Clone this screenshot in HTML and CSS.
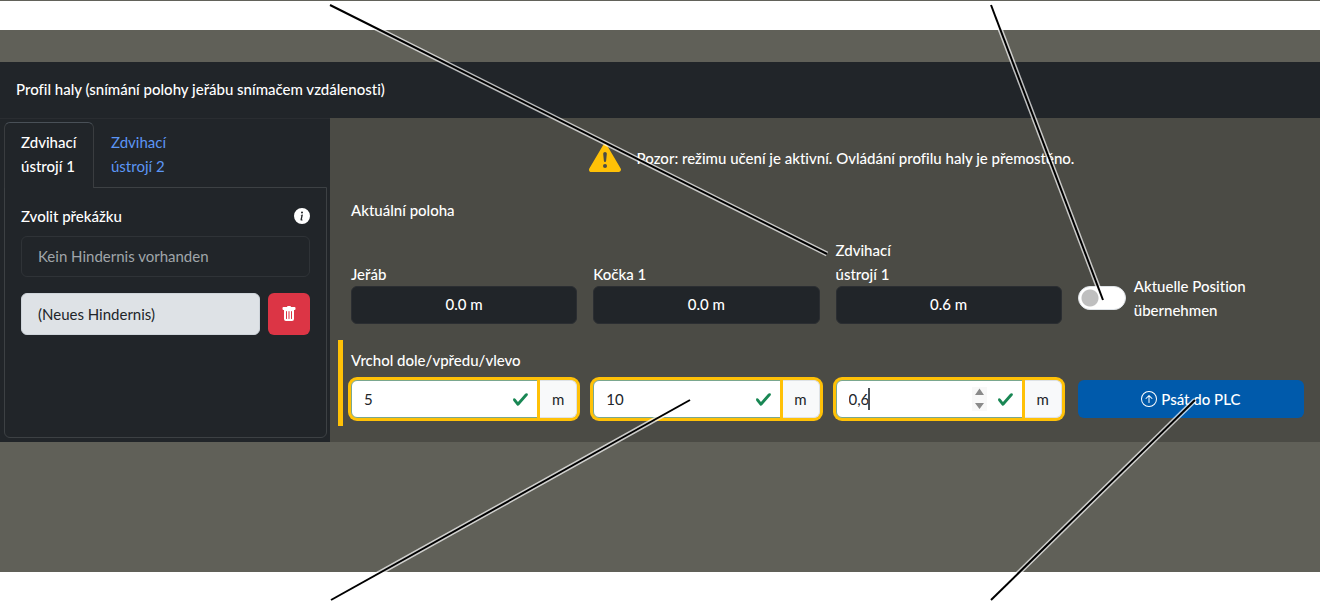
FILE: index.html
```
<!DOCTYPE html>
<html lang="cs">
<head>
    <meta charset="UTF-8">
    <meta name="viewport" content="width=device-width, initial-scale=1.0">
    <title>Profil haly</title>
    <link rel="stylesheet" href="styles.css">
</head>
<body>
    <div class="backdrop">
        <div class="dialog">
            <header class="dialog-header">
                <h1>Profil haly (snímání polohy jeřábu snímačem vzdálenosti)</h1>
            </header>
            <div class="dialog-body">
                <aside class="sidebar">
                    <nav class="tabs">
                        <a href="#hoist-1" class="tab active">Zdvihací ústrojí&nbsp;1</a>
                        <a href="#hoist-2" class="tab">Zdvihací ústrojí&nbsp;2</a>
                    </nav>
                    <div class="tab-panel" id="hoist-1">
                        <div class="panel-title">
                            <h2>Zvolit překážku</h2>
                            <svg class="icon" viewBox="0 0 16 16" fill="currentColor">
                                <path d="M8 16A8 8 0 1 0 8 0a8 8 0 0 0 0 16m.93-9.412-1 4.705c-.07.34.029.533.304.533.194 0 .487-.07.686-.246l-.088.416c-.287.346-.92.598-1.465.598-.703 0-1.002-.422-.808-1.319l.738-3.468c.064-.293.006-.399-.287-.47l-.451-.081.082-.381zM8 5.5a1 1 0 1 1 0-2 1 1 0 0 1 0 2"/>
                            </svg>
                        </div>
                        <p class="obstacle-empty">Kein Hindernis vorhanden</p>
                        <div class="obstacle-row">
                            <button type="button" class="obstacle">(Neues Hindernis)</button>
                            <button type="button" class="delete-button" aria-label="Smazat">
                                <svg class="icon" viewBox="0 0 16 16" fill="currentColor">
                                    <path d="M2.5 1a1 1 0 0 0-1 1v1a1 1 0 0 0 1 1H3v9a2 2 0 0 0 2 2h6a2 2 0 0 0 2-2V4h.5a1 1 0 0 0 1-1V2a1 1 0 0 0-1-1H10a1 1 0 0 0-1-1H7a1 1 0 0 0-1 1zm3 4a.5.5 0 0 1 .5.5v7a.5.5 0 0 1-1 0v-7a.5.5 0 0 1 .5-.5M8 5a.5.5 0 0 1 .5.5v7a.5.5 0 0 1-1 0v-7A.5.5 0 0 1 8 5m3 .5v7a.5.5 0 0 1-1 0v-7a.5.5 0 0 1 1 0"/>
                                </svg>
                            </button>
                        </div>
                    </div>
                </aside>

                <main class="content">
                    <div class="warning">
                        <svg class="warning-icon" viewBox="0 0 16 16" fill="currentColor">
                            <path d="M8.982 1.566a1.13 1.13 0 0 0-1.96 0L.165 13.233c-.457.778.091 1.767.98 1.767h13.713c.889 0 1.438-.99.98-1.767zM8 5c.535 0 .954.462.9.995l-.35 3.507a.552.552 0 0 1-1.1 0L7.1 5.995A.905.905 0 0 1 8 5m.002 6a1 1 0 1 1 0 2 1 1 0 0 1 0-2"/>
                        </svg>
                        <p>Pozor: režimu učení je aktivní. Ovládání profilu haly je přemostěno.</p>
                    </div>

                    <section class="group">
                        <h2>Aktuální poloha</h2>
                        <div class="grid positions">
                            <div class="position">
                                <span>Jeřáb</span>
                                <output>0.0 m</output>
                            </div>
                            <div class="position">
                                <span>Kočka 1</span>
                                <output>0.0 m</output>
                            </div>
                            <div class="position">
                                <span class="two-lines">Zdvihací ústrojí&nbsp;1</span>
                                <output>0.6 m</output>
                            </div>
                            <div class="switch">
                                <input type="checkbox" id="take-position">
                                <label for="take-position">Aktuelle Position übernehmen</label>
                            </div>
                        </div>
                    </section>

                    <form class="group changed">
                        <h2>Vrchol dole/vpředu/vlevo</h2>
                        <div class="grid">
                            <div class="input-group">
                                <div class="field">
                                    <input type="text" id="crane" value="5" aria-label="Jeřáb">
                                    <svg class="check" viewBox="0 0 8 8"><path fill="#198754" d="M2.3 6.73.6 4.53c-.4-1.04.46-1.4 1.1-.8l1.1 1.4 3.4-3.8c.6-.63 1.6-.27 1.2.7l-4 4.6c-.43.5-.8.4-1.1.1"/></svg>
                                </div>
                                <label for="crane" class="unit">m</label>
                            </div>
                            <div class="input-group">
                                <div class="field">
                                    <input type="text" id="trolley" value="10" aria-label="Kočka 1">
                                    <svg class="check" viewBox="0 0 8 8"><path fill="#198754" d="M2.3 6.73.6 4.53c-.4-1.04.46-1.4 1.1-.8l1.1 1.4 3.4-3.8c.6-.63 1.6-.27 1.2.7l-4 4.6c-.43.5-.8.4-1.1.1"/></svg>
                                </div>
                                <label for="trolley" class="unit">m</label>
                            </div>
                            <div class="input-group">
                                <div class="field">
                                    <input type="text" id="hoist" value="0,6" aria-label="Zdvihací ústrojí 1">
                                    <span class="caret"></span>
                                    <svg class="spinner" viewBox="0 0 15 24"><path fill="#f8f8f8" d="M0 0h15v24H0z"/><path fill="#8a8a8a" d="M3 8l4.500-6.500 4.500 6.500zM3 16h9l-4.500 6z"/></svg>
                                    <svg class="check" viewBox="0 0 8 8"><path fill="#198754" d="M2.3 6.73.6 4.53c-.4-1.04.46-1.4 1.1-.8l1.1 1.4 3.4-3.8c.6-.63 1.6-.27 1.2.7l-4 4.6c-.43.5-.8.4-1.1.1"/></svg>
                                </div>
                                <label for="hoist" class="unit">m</label>
                            </div>
                            <button type="submit" class="write-button">
                                <svg class="icon" viewBox="0 0 16 16" fill="currentColor">
                                    <path d="M1 8a7 7 0 1 0 14 0A7 7 0 0 0 1 8m15 0A8 8 0 1 1 0 8a8 8 0 0 1 16 0m-7.500 3.500a.5.5 0 0 1-1 0V5.707L5.354 7.854a.5.5 0 1 1-.708-.708l3-3a.5.5 0 0 1 .708 0l3 3a.5.5 0 0 1-.708.708L8.500 5.707z"/>
                                </svg>
                                Psát do PLC
                            </button>
                        </div>
                    </form>
                </main>
            </div>
        </div>
    </div>

    <!-- Leader lines of the annotations -->
    <svg class="leaders" viewBox="0 0 1320 604">
        <g class="leader-halo">
            <path d="M330 5 827 254"/>
            <path d="M991 5 1103 300"/>
            <path d="M331 600 690 400"/>
            <path d="M991 600 1195 400"/>
        </g>
        <g class="leader-line">
            <path d="M330 5 827 254"/>
            <path d="M991 5 1103 300"/>
            <path d="M331 600 690 400"/>
            <path d="M991 600 1195 400"/>
        </g>
    </svg>
</body>
</html>
```
FILE: styles.css
```
/* Basic Reset */
* {
    margin: 0;
    padding: 0;
    box-sizing: border-box;
}

body {
    position: relative;
    font-family: Lato, "Noto Sans", sans-serif;
    font-size: 15px;
    font-variant-ligatures: none;
    line-height: 24px;
    color: #fff;
    background: #fff;
    border-top: 1px solid #62625a;
    padding: 29px 0 32px;
}

h1, h2 {
    font-size: 15px;
    font-weight: 500;
}

button, input {
    font: inherit;
}

.icon {
    width: 16px;
    height: 16px;
    flex: none;
}

/* Dialog */
.backdrop {
    background: #606058;
    padding: 32px 0 130px;
}

.dialog-header {
    background: #212529;
    padding: 15px 16px 17px;
}

.dialog-body {
    display: flex;
}

/* Sidebar */
.sidebar {
    flex: 0 0 25%;
    display: flex;
    flex-direction: column;
    background: #212529;
    border-top: 1px solid #2a2d31;
    padding: 3px 3px 4px 4px;
}

.tabs {
    display: flex;
}

.tab {
    width: min-content;
    min-width: 90px;
    padding: 7px 16px 9px;
    border: 1px solid transparent;
    border-bottom: none;
    color: #5c96f5;
    text-decoration: none;
}

.tab.active {
    color: #fff;
    font-weight: 500;
    background: #212529;
    border-color: #495057 #3a3d40 #212529;
    border-radius: 6px 6px 0 0;
    margin-bottom: -1px;
    padding-bottom: 10px;
    z-index: 1;
}

.tab-panel {
    flex: 1;
    border: 1px solid #3d4144;
    border-radius: 0 0 6px 6px;
    padding: 16px;
}

.panel-title {
    display: flex;
    align-items: center;
    justify-content: space-between;
    margin-bottom: 8px;
}

.obstacle-empty {
    padding: 7px 16px 8px;
    border: 1px solid #2f3337;
    border-radius: 6px;
    color: #a0a5aa;
    margin-bottom: 16px;
}

.obstacle-row {
    display: flex;
    gap: 8px;
}

.obstacle {
    flex: 1;
    padding: 8px 16px;
    border: 1px solid #ced4da;
    border-radius: 6px;
    background: #dee2e6;
    color: #212529;
    text-align: left;
}

.delete-button {
    display: flex;
    align-items: center;
    justify-content: center;
    width: 42px;
    height: 42px;
    border: none;
    border-radius: 6px;
    background: #dc3545;
    color: #fff;
}

/* Content */
.content {
    flex: 1;
    background: #4b4b45;
    padding: 24px 0 16px 8px;
}

.warning {
    display: flex;
    align-items: center;
    justify-content: center;
    gap: 16px;
    margin: 0 0 16px 5px;
    font-weight: 500;
}

.warning-icon {
    width: 32px;
    height: 32px;
    color: #ffc107;
}

.group {
    border-left: 5px solid transparent;
    padding: 8px 16px 8px 8px;
}

.group.changed {
    border-color: #ffc107;
    margin-top: 8px;
}

.grid {
    display: grid;
    grid-template-columns: repeat(4, 1fr);
    gap: 16px;
    margin-top: 8px;
}

.positions {
    margin-top: 16px;
    align-items: end;
    font-weight: 500;
}

.position {
    display: flex;
    flex-direction: column;
}

.two-lines {
    width: min-content;
}

.position output {
    background: #212529;
    border: 1px solid #2b2e32;
    border-radius: 6px;
    padding: 5px 12px 7px;
    height: 38px;
    text-align: center;
}

.switch {
    display: flex;
    align-items: center;
    gap: 8px;
    padding-bottom: 2px;
}

.switch input {
    appearance: none;
    flex: none;
    width: 48px;
    height: 24px;
    border: 1px solid #dee2e6;
    border-radius: 12px;
    background: #fff radial-gradient(circle at 11px 11px, #bfbfbf 8px, transparent 9px);
}

/* Inputs */
.input-group {
    display: flex;
    height: 38px;
}

.field {
    flex: 1;
    position: relative;
    min-width: 0;
}

.field input {
    width: 100%;
    height: 38px;
    padding: 6px 36px 6px 12px;
    border: 1px solid #7aa78f;
    border-radius: 6px 0 0 6px;
    background: #fff;
    color: #212529;
    outline: none;
    box-shadow: 0 0 0 3px #ffc107;
}

.check {
    position: absolute;
    top: 11px;
    right: 11px;
    width: 17px;
    height: 17px;
}

.spinner {
    position: absolute;
    top: 7px;
    right: 38px;
    width: 15px;
    height: 24px;
}

.caret {
    position: absolute;
    top: 8px;
    left: 32px;
    width: 2px;
    height: 22px;
    background: #495057;
}

.unit {
    position: relative;
    width: 37px;
    padding: 6px 0;
    text-align: center;
    border: 1px solid #dee2e6;
    border-left: none;
    border-radius: 0 6px 6px 0;
    background: #f8f9fa;
    color: #212529;
    box-shadow: 0 0 0 3px #ffc107;
}

.write-button {
    display: flex;
    align-items: center;
    justify-content: center;
    gap: 4px;
    height: 38px;
    border: none;
    border-radius: 6px;
    background: #005aab;
    color: #fff;
    font-weight: 500;
}

/* Annotation lines */
.leaders {
    position: absolute;
    top: -1px;
    left: 0;
    width: 100%;
    pointer-events: none;
    fill: none;
}

.leader-halo {
    stroke: #fff;
    stroke-width: 5;
    opacity: 0.7;
}

.leader-line {
    stroke: #000;
    stroke-width: 2;
}
```
